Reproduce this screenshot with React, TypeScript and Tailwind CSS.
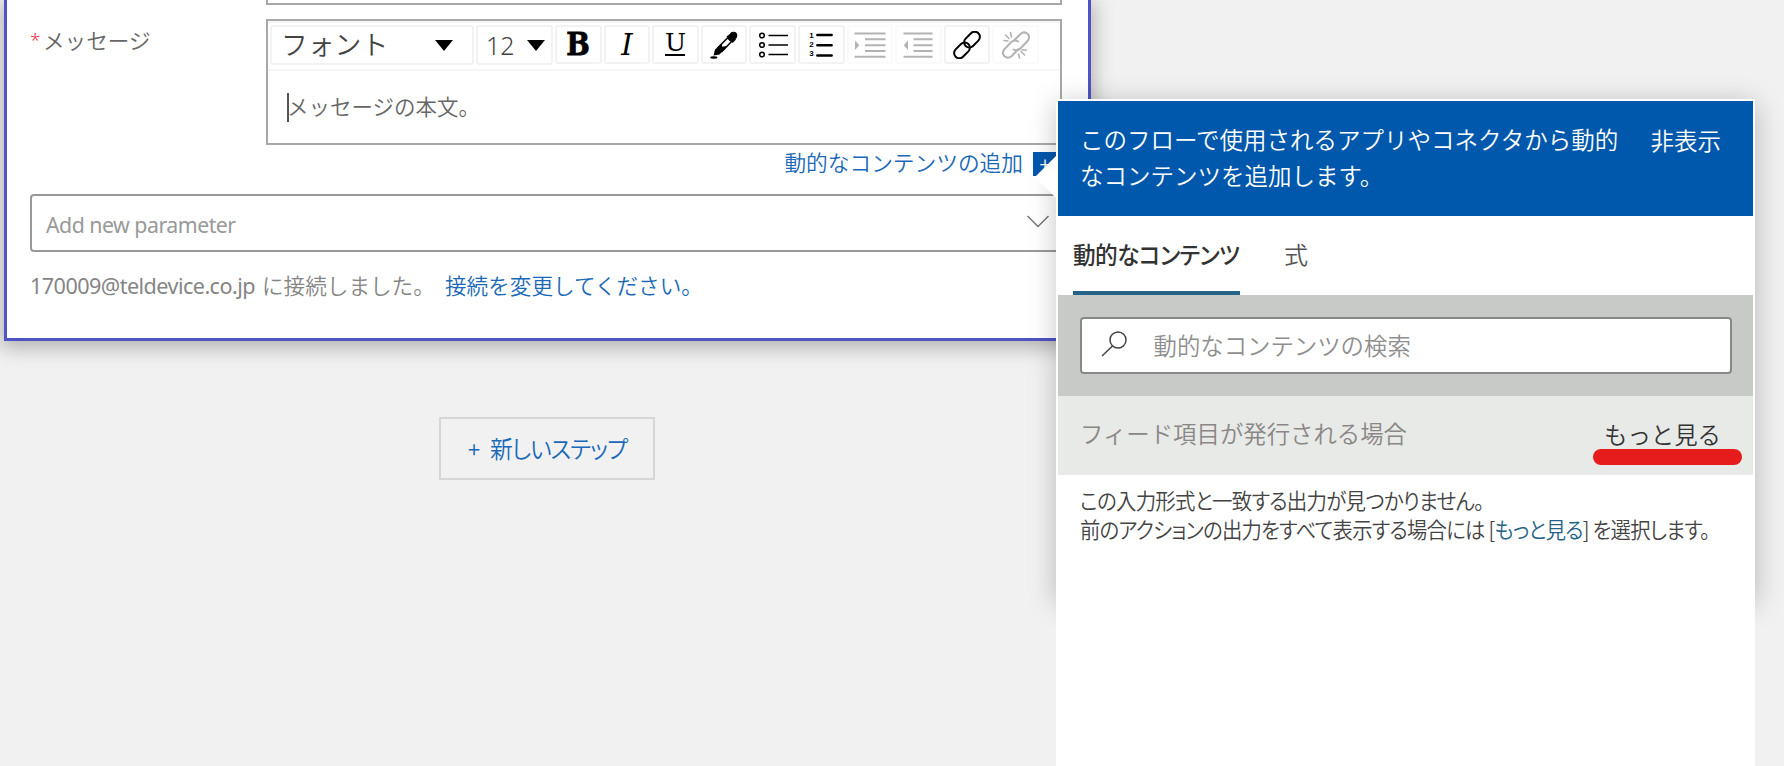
import { ReactNode } from "react";

const ToolButton = ({ children, faded }: { children: ReactNode; faded?: boolean }) => (
  <button
    className={`w-[46.6px] h-[39px] shrink-0 flex items-center justify-center rounded-[3px] border-2 ${faded ? "border-[#fafafa] text-[#b3b3b3]" : "border-[#f2f2f2] text-black"}`}
  >
    {children}
  </button>
);

const Caret = () => (
  <svg width="18" height="11" viewBox="0 0 18 11">
    <path d="M0 0h18L9 11z" fill="#000" />
  </svg>
);

const ColorIcon = () => (
  <svg width="28" height="28" viewBox="0 0 28 28">
    <circle cx="23.500" cy="4.500" r="3.800" fill="currentColor" />
    <path d="M16.500 5.500l4-3 5.500 6-3.300 3.500z" fill="currentColor" />
    <path d="M17.500 7 8 16.500 12 20.500 21.500 10.500z" fill="#fff" stroke="currentColor" strokeWidth="1.500" />
    <path d="M11.500 12.700 5 18.500 3.500 24.500 9.500 23.500 18 14.800 12.300 15.800z" fill="currentColor" />
    <ellipse cx="3.800" cy="26.500" rx="3.600" ry="1.200" fill="currentColor" />
  </svg>
);

const BulletIcon = () => (
  <svg width="30" height="28" viewBox="0 0 30 28" fill="none" stroke="currentColor" strokeWidth="1.500">
    <circle cx="4" cy="4.500" r="2.300" />
    <circle cx="4" cy="14" r="2.300" />
    <circle cx="4" cy="23.500" r="2.300" />
    <path d="M10.500 4.500H30M10.500 14H30M10.500 23.500H30" />
  </svg>
);

const NumberIcon = () => (
  <span className="flex items-center gap-[3px] h-[28px]">
    <span className="flex flex-col w-[4px] text-[8px] leading-[9px] font-bold font-['Liberation_Sans']">
      <span>1</span>
      <span>2</span>
      <span>3</span>
    </span>
    <svg width="17" height="28" viewBox="0 0 17 28" stroke="currentColor" strokeWidth="2.600" strokeLinecap="round">
      <path d="M1.400 4h14.200M1.400 14.300h14.200M1.400 24.500h14.200" />
    </svg>
  </span>
);

const IndentIcon = () => (
  <svg width="32" height="28" viewBox="0 0 32 28">
    <path d="M.5 2.500h31M11 8.300h20.500M11 14.200h20.500M11 20h20.500M.5 25.800h31" stroke="currentColor" strokeWidth="1.900" />
    <path d="M1 9.500v9.500l4.300-4.800z" fill="currentColor" />
  </svg>
);

const OutdentIcon = () => (
  <svg width="30" height="28" viewBox="0 0 30 28">
    <path d="M.5 2.500h29M10.500 8.300h19M10.500 14.200h19M10.500 20h19M.5 25.800h29" stroke="currentColor" strokeWidth="1.900" />
    <path d="M5 9.500v9.500L.7 14.200z" fill="currentColor" />
  </svg>
);

const LinkIcon = () => (
  <svg width="28" height="28" viewBox="0 0 28 28" fill="none" stroke="currentColor" strokeWidth="2" strokeLinecap="round">
    <rect x="-9" y="-5.200" width="18" height="10.400" rx="5.200" transform="translate(19 8.600) rotate(-45)" />
    <rect x="-9" y="-5.200" width="18" height="10.400" rx="5.200" transform="translate(9 19.400) rotate(-45)" />
  </svg>
);

const UnlinkIcon = () => (
  <svg width="28" height="28" viewBox="0 0 28 28" fill="none" stroke="currentColor" strokeWidth="2" strokeLinecap="round">
    <path d="M11.500 10 18.500 3q3.500-3.200 7-.2 3 3.200.2 7l-7.500 8q-3.200 2.700-6.700.7" />
    <path d="M16.500 18 9.500 25.200q-3.500 3-7 .1-3-3.200-.2-7l7.200-7.500q3.200-2.500 6.700-.3" />
    <path d="M8.500 1.500l1 4.500M3.500 4l3.500 3.500M2 9.500l4 .5M24.500 19h-4.500M22.500 24l-3.500-3.500M17.500 27l-1-4" strokeWidth="1.600" />
  </svg>
);

const Editor = () => (
  <div className="w-[796px] h-[126px] border-2 border-[#a8a8a8] bg-white">
    <div className="h-[50px] flex items-start gap-[2px] pt-[2px] pl-[2px] border-t-2 border-b-2 border-[#f6f6f6]">
      <div className="w-[204px] h-[40px] shrink-0 flex items-center justify-between pl-[9px] pr-[19px] border-2 border-[#f2f2f2] rounded-[3px]">
        <span className="text-[26.8px] leading-[36px] -mt-[3px] text-[#444]">フォント</span>
        <Caret />
      </div>
      <div className="w-[77px] h-[40px] shrink-0 flex items-center justify-between pl-[8px] pr-[6px] border-2 border-[#f2f2f2] rounded-[3px]">
        <span className="text-[25px] leading-[36px] text-[#444] font-['Noto_Sans'] font-light">12</span>
        <Caret />
      </div>
      <ToolButton>
        <span className="text-[31px] leading-none font-bold font-['DejaVu_Serif'] scale-x-90 [-webkit-text-stroke:0.8px_black]">B</span>
      </ToolButton>
      <ToolButton>
        <span className="text-[29px] leading-none italic font-['DejaVu_Serif'] mt-px">I</span>
      </ToolButton>
      <ToolButton>
        <span className="w-[20px] h-[23px] flex justify-center border-b-2 border-black">
          <span className="text-[25px] leading-[20px] font-['DejaVu_Serif']">U</span>
        </span>
      </ToolButton>
      <ToolButton>
        <ColorIcon />
      </ToolButton>
      <ToolButton>
        <BulletIcon />
      </ToolButton>
      <ToolButton>
        <NumberIcon />
      </ToolButton>
      <ToolButton faded>
        <IndentIcon />
      </ToolButton>
      <ToolButton faded>
        <OutdentIcon />
      </ToolButton>
      <ToolButton>
        <LinkIcon />
      </ToolButton>
      <ToolButton faded>
        <UnlinkIcon />
      </ToolButton>
    </div>
    <div className="flex items-center pt-[22px] pl-[19px]">
      <span className="w-[2px] h-[29px] bg-[#555]" />
      <span className="text-[21.5px] leading-[29px] text-[#666] -ml-[2px] -mt-[5px]">メッセージの本文。</span>
    </div>
  </div>
);

const ActionCard = () => (
  <section className="w-[1087px] h-[341px] ml-[4px] px-[23px] border-[3px] border-t-0 border-[#4f53c3] bg-white shadow-[0_4px_18px_3px_rgba(0,0,0,0.26)]">
    <div className="ml-[236px] w-[796px] h-[5px] border-2 border-t-0 border-[#a8a8a8]" />
    <div className="mt-[14px] flex">
      <div className="w-[236px] h-[43px] flex items-center text-[21.6px] text-[#666]">
        <span className="w-[13px] text-[#f0323c] font-['Noto_Sans'] text-[19px]">*</span>
        <span>メッセージ</span>
      </div>
      <Editor />
    </div>
    <div className="h-[49px] flex justify-end items-start pt-[7px] pr-[8px]">
      <a className="text-[21.7px] leading-[24px] -mt-[2px] text-[#1a69b8] mr-[10px]">動的なコンテンツの追加</a>
      <span className="w-[24px] h-[24px] bg-[#0058ad] text-white flex items-center justify-center text-[20px]">+</span>
    </div>
    <div className="w-[1031px] h-[58px] flex items-center justify-between pl-[14px] pr-[9px] border-2 border-[#999] rounded-[4px]">
      <span className="text-[21.3px] mt-[4px] text-[#999] font-['Noto_Sans'] font-normal tracking-[-0.5px]">Add new parameter</span>
      <svg width="24" height="13" viewBox="0 0 24 13" fill="none" stroke="#777" strokeWidth="1.500" className="mb-[3px]">
        <path d="M1.500 1 12 11.500 22.500 1" />
      </svg>
    </div>
    <div className="flex items-center mt-[18px] leading-[32px] text-[21.6px] text-[#858585] whitespace-nowrap">
      <span className="w-[232px] font-['Noto_Sans'] font-normal tracking-[-0.55px]">170009@teldevice.co.jp</span>
      <span className="w-[183px] -mt-[2px]">に接続しました。</span>
      <a className="text-[#1a69b8] -mt-[2px]">接続を変更してください。</a>
    </div>
  </section>
);

const DynamicContentPanel = () => (
  <aside className="absolute left-[1056px] top-[99px] w-[699px] h-[680px] bg-white border-2 border-b-0 border-white">
    <svg className="absolute left-[-23px] top-[53px]" width="23" height="46" viewBox="0 0 23 46">
      <path d="M23 0 0 23 23 46z" fill="#fff" />
    </svg>
    <div className="h-[115px] flex justify-between pt-[20px] pl-[22px] pr-[32px] bg-[#0058ad] text-white text-[23.5px] leading-[36px] whitespace-nowrap">
      <p>
        このフローで使用されるアプリやコネクタから動的
        <br />
        なコンテンツを追加します。
      </p>
      <span className="pt-px">非表示</span>
    </div>
    <div className="h-[79px] flex pl-[15px] text-[24px] whitespace-nowrap">
      <div className="w-[167px] h-[79px] pt-[20px] leading-[36px] font-medium text-[#333] border-b-4 border-[#246387]">
        <span className="inline-block origin-left scale-x-[0.945] tracking-[-0.6px] [font-feature-settings:'palt']">動的なコンテンツ</span>
      </div>
      <div className="ml-[44px] pt-[20px] leading-[36px] text-[#555]">式</div>
    </div>
    <div className="h-[101px] flex justify-center pt-[22px] bg-[#c8cac7]">
      <div className="w-[652px] h-[57px] flex items-center pl-[18px] bg-white border-2 border-[#888] rounded-[4px]">
        <svg width="30" height="28" viewBox="0 0 30 28" fill="none" stroke="#444" strokeWidth="1.500" className="mb-[3px]">
          <circle cx="18" cy="10" r="8" />
          <path d="M12.500 16 2 26" />
        </svg>
        <span className="ml-[24px] text-[23.4px] text-[#8f8f8f]">動的なコンテンツの検索</span>
      </div>
    </div>
    <div className="relative h-[79px] flex items-center justify-between pl-[22px] pr-[32px] pb-[3px] bg-[#e8eae7] text-[23.4px]">
      <span className="text-[#8a8686]">フィード項目が発行される場合</span>
      <span className="text-[#333] pt-px">もっと見る</span>
      <span className="absolute right-[11px] top-[53px] w-[149px] h-[16px] rounded-full bg-[#e61c1c]" />
    </div>
    <div className="pt-[10px] pl-[22px] text-[22px] leading-[29px] text-[#444] whitespace-nowrap tracking-[-0.8px] [font-feature-settings:'palt']">
      <p className="origin-left scale-x-[0.93]">この入力形式と一致する出力が見つかりません。</p>
      <p className="origin-left scale-x-[0.925]">
        前のアクションの出力をすべて表示する場合には [<a className="text-[#246387]">もっと見る</a>] を選択します。
      </p>
    </div>
  </aside>
);

export default function App() {
  return (
    <main className="relative w-[1784px] h-[766px] overflow-hidden bg-[#f1f1f1] font-[350] font-['Noto_Sans_CJK_JP',sans-serif]">
      <ActionCard />
      <button className="ml-[439px] mt-[76px] w-[216px] h-[63px] flex items-center pl-[27px] pb-[2px] gap-[10px] border-2 border-[#d6d6d6] text-[#1a69b8] text-[24px] whitespace-nowrap">
        <span className="text-[22px] pt-[2px]">+</span>
        <span className="origin-left scale-x-[0.95] tracking-[-1px] [font-feature-settings:'palt']">新しいステップ</span>
      </button>
      {/* the shadow stops above the panel's end */}
      <div className="absolute left-[1057px] top-[99px] w-[698px] h-[500px] shadow-[0_5px_26px_0px_rgba(0,0,0,0.25)]" />
      <DynamicContentPanel />
    </main>
  );
}
